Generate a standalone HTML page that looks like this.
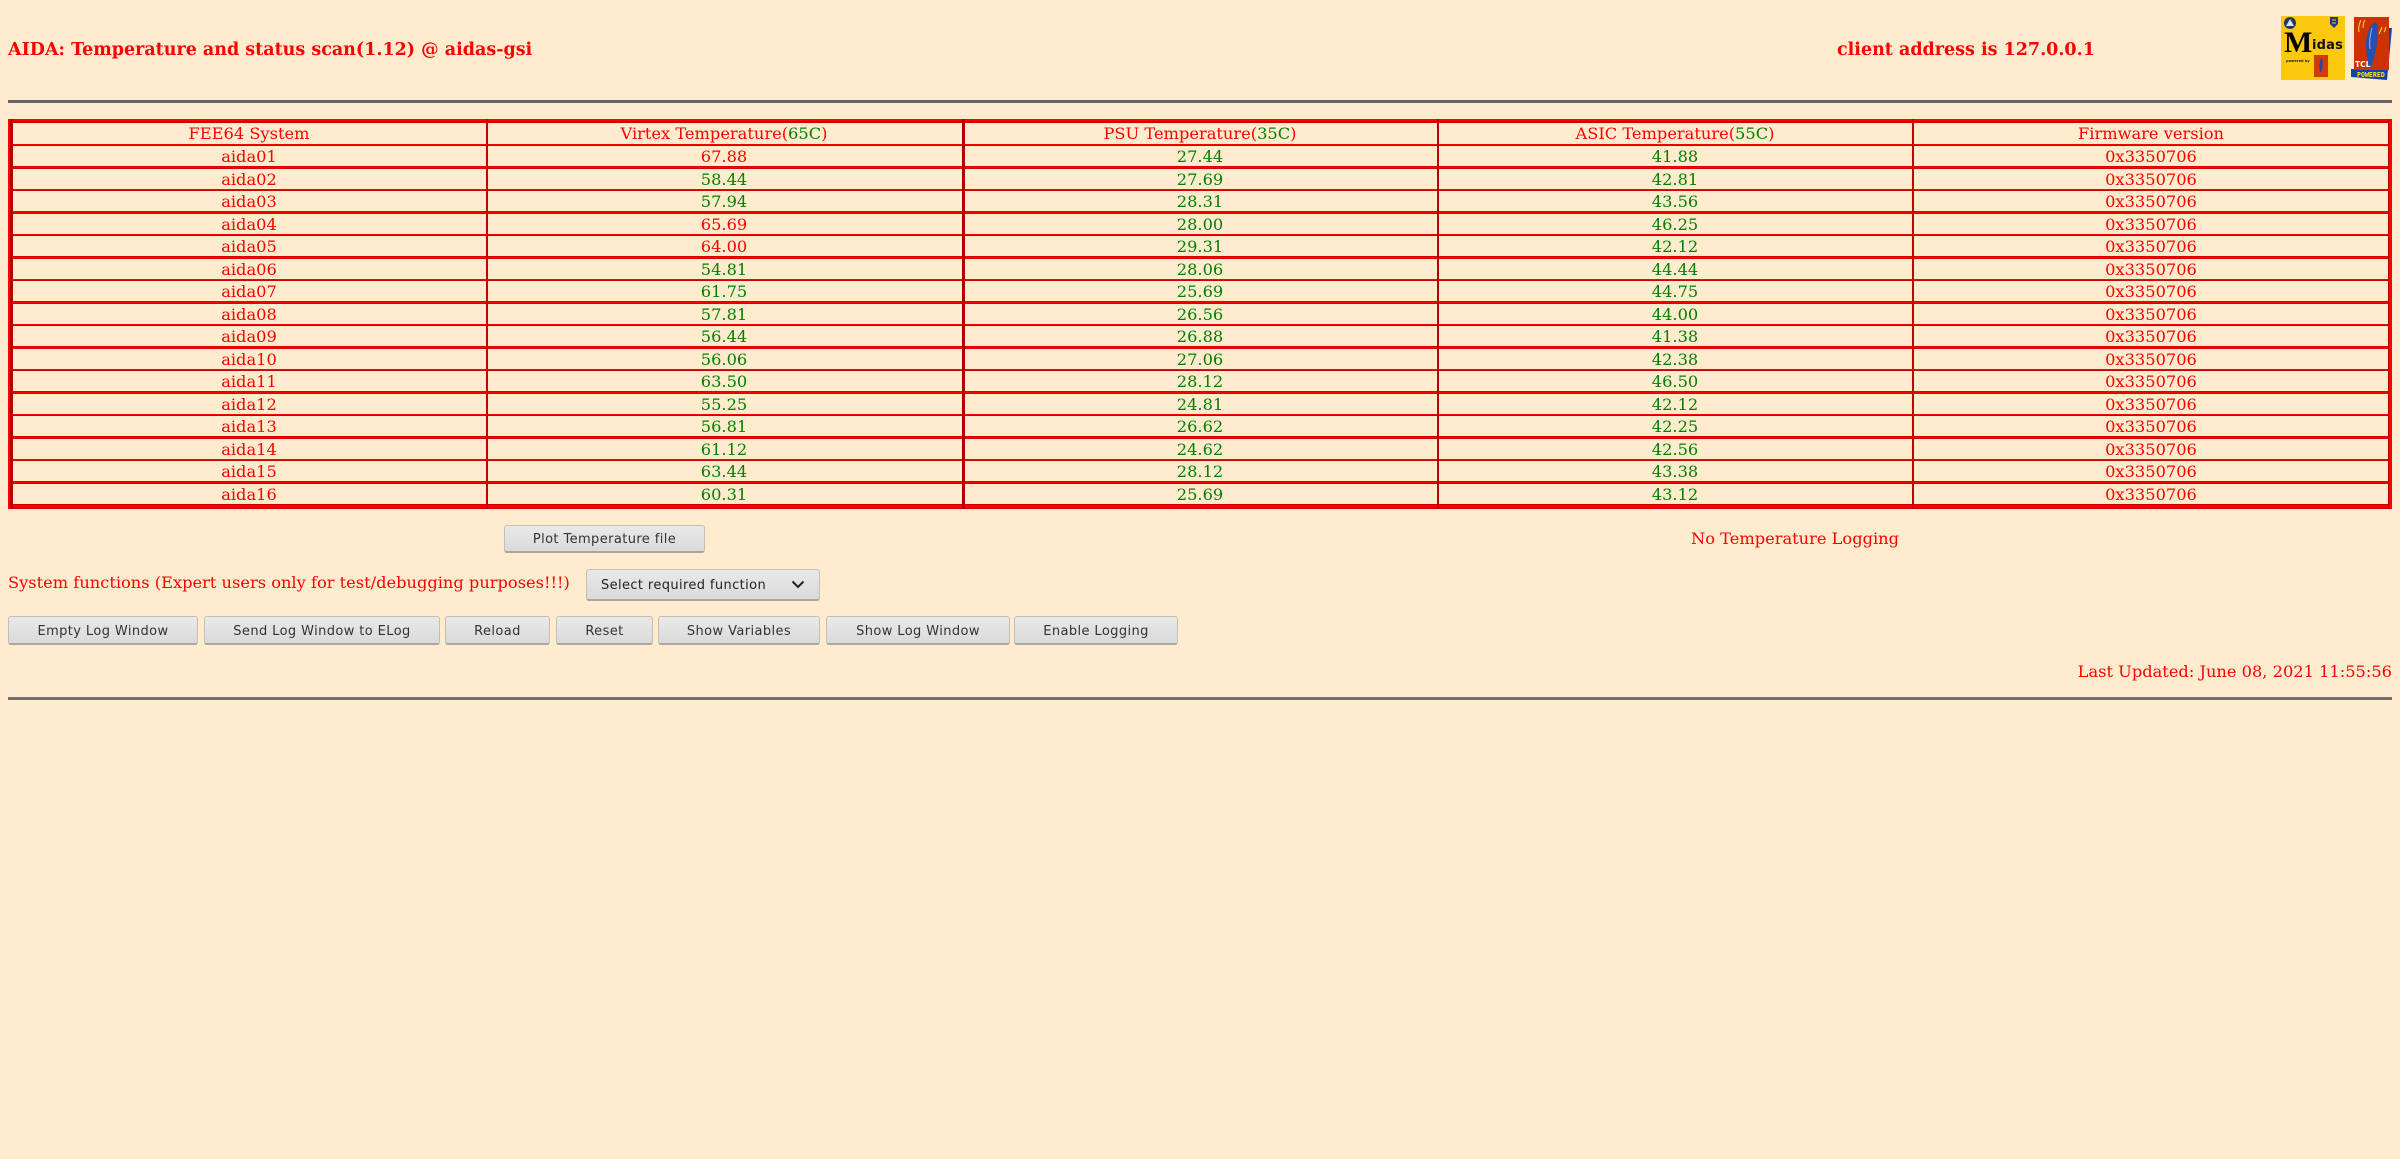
<!DOCTYPE html>
<html><head><meta charset="utf-8"><title>AIDA Temperature</title>
<style>
html,body{margin:0;padding:0;background:#ffebcd;width:2400px;height:1159px;overflow:hidden}
body{position:relative;font-family:"DejaVu Serif",serif;color:#f00;font-size:16.24px}
.a{position:absolute;white-space:nowrap}
.b{font-weight:bold;font-size:17.5px}
table{position:absolute;left:8px;top:123px;width:2386px;border-collapse:collapse;table-layout:fixed;font-size:16.24px}
td{padding:0;text-align:center;line-height:22px;overflow:visible}
tr{height:22px}
tr.t{height:23px}
tr.t td{line-height:23px}
tr.u td{position:relative;top:1px}
.g{color:#008000}
.h{position:absolute;left:8px;width:2384px}
.n{height:2px;background:linear-gradient(#f00 50%,#c00 50%)}
.k{height:3px;background:linear-gradient(#d00 33%,#f00 33%,#f00 67%,#d00 67%)}
.v{position:absolute;top:119px;height:390px}
button{position:absolute;box-sizing:border-box;margin:0;padding:2px 0 0;border:1px solid #c4bfb6;border-bottom:2px solid #aaa69e;border-radius:3px;background:linear-gradient(#e9e9e9,#dadada);color:#333;font-family:"DejaVu Sans",sans-serif;font-size:13px;letter-spacing:.4px;text-align:center}
hr{position:absolute;margin:0;border:0}
</style></head><body>
<div class="a b" style="left:8px;top:38px;line-height:24px">AIDA: Temperature and status scan(1.12) @ aidas-gsi</div>
<div class="a b" style="left:1837px;top:38px;line-height:24px">client address is 127.0.0.1</div>

<svg class="a" style="left:2281px;top:16px" width="64" height="64" viewBox="0 0 64 64">
<rect width="64" height="64" fill="#fcc80e"/>
<circle cx="9" cy="7" r="6" fill="#1d3a63"/><path d="M5 10 L9 3 L13 10Z" fill="#d8e0e8"/>
<path d="M49 1h8v7l-4 4-4-4z" fill="#1d3a8a"/><path d="M51 4h4M51 7h4" stroke="#fcc80e"/>
<text x="3" y="36" font-family="Liberation Serif,serif" font-weight="bold" font-size="30" fill="#000">M</text>
<text x="31" y="33" font-family="DejaVu Sans,sans-serif" font-weight="bold" font-size="13" letter-spacing=".2" fill="#111">idas</text>
<text x="5" y="46" font-family="DejaVu Sans,sans-serif" font-weight="bold" font-size="3.6" fill="#222">powered by</text>
<rect x="33" y="39" width="14" height="22" fill="#d13a10"/><path d="M41 42c-3 3-3 9-2 14l1 0c2-5 2-10 1-14z" fill="#26459c"/>
</svg>
<svg class="a" style="left:2350px;top:15px" width="44" height="66" viewBox="0 0 44 66">
<path d="M1 54 L1 62 L37 65 L38 54Z" fill="#1440b0"/>
<path d="M38 13 L42 13 L38 55 L36 55Z" fill="#1440b0"/>
<rect x="4" y="2" width="35" height="53" fill="#cc3300"/>
<path d="M26 7C20 9 17 18 16 28C16 36 17 44 19 53L21 53C24 44 27 33 27 24C28 17 28 10 26 7Z" fill="#2450b0"/>
<path d="M22 13c-2 7-3 14-2 21" stroke="#9fb0d8" fill="none"/>
<path d="M11 5c-2 4-3 8-2 12M15 5c-2 3-2 6-2 8M32 12c-1 3-2 5-3 7M36 12c-1 2-1 4-2 5" stroke="#f2c14a" stroke-width="1.2" fill="none"/>
<text x="5" y="52" font-family="DejaVu Sans,sans-serif" font-weight="bold" font-size="7.5" fill="#fff">TCL</text>
<text x="7" y="62" font-family="DejaVu Sans Mono,monospace" font-weight="bold" font-size="6.6" fill="#ffee00">POWERED</text>
</svg>

<hr style="left:8px;top:100px;width:2384px;height:3px;background:#666">

<table><colgroup><col style="width:482px"><col style="width:468px"><col style="width:484px"><col style="width:466px"><col style="width:486px"></colgroup>
<tr><td>FEE64 System</td><td>Virtex Temperature(<span class="g">65C</span>)</td><td>PSU Temperature(<span class="g">35C</span>)</td><td>ASIC Temperature(<span class="g">55C</span>)</td><td>Firmware version</td></tr>
<tr class="t"><td>aida01</td><td>67.88</td><td class="g">27.44</td><td class="g">41.88</td><td>0x3350706</td></tr>
<tr class="u"><td>aida02</td><td class="g">58.44</td><td class="g">27.69</td><td class="g">42.81</td><td>0x3350706</td></tr>
<tr class="t"><td>aida03</td><td class="g">57.94</td><td class="g">28.31</td><td class="g">43.56</td><td>0x3350706</td></tr>
<tr class="u"><td>aida04</td><td>65.69</td><td class="g">28.00</td><td class="g">46.25</td><td>0x3350706</td></tr>
<tr class="t"><td>aida05</td><td>64.00</td><td class="g">29.31</td><td class="g">42.12</td><td>0x3350706</td></tr>
<tr class="u"><td>aida06</td><td class="g">54.81</td><td class="g">28.06</td><td class="g">44.44</td><td>0x3350706</td></tr>
<tr class="t"><td>aida07</td><td class="g">61.75</td><td class="g">25.69</td><td class="g">44.75</td><td>0x3350706</td></tr>
<tr class="u"><td>aida08</td><td class="g">57.81</td><td class="g">26.56</td><td class="g">44.00</td><td>0x3350706</td></tr>
<tr class="t"><td>aida09</td><td class="g">56.44</td><td class="g">26.88</td><td class="g">41.38</td><td>0x3350706</td></tr>
<tr class="u"><td>aida10</td><td class="g">56.06</td><td class="g">27.06</td><td class="g">42.38</td><td>0x3350706</td></tr>
<tr class="t"><td>aida11</td><td class="g">63.50</td><td class="g">28.12</td><td class="g">46.50</td><td>0x3350706</td></tr>
<tr class="u"><td>aida12</td><td class="g">55.25</td><td class="g">24.81</td><td class="g">42.12</td><td>0x3350706</td></tr>
<tr class="t"><td>aida13</td><td class="g">56.81</td><td class="g">26.62</td><td class="g">42.25</td><td>0x3350706</td></tr>
<tr class="u"><td>aida14</td><td class="g">61.12</td><td class="g">24.62</td><td class="g">42.56</td><td>0x3350706</td></tr>
<tr class="t"><td>aida15</td><td class="g">63.44</td><td class="g">28.12</td><td class="g">43.38</td><td>0x3350706</td></tr>
<tr class="u"><td>aida16</td><td class="g">60.31</td><td class="g">25.69</td><td class="g">43.12</td><td>0x3350706</td></tr>
</table>

<div class="h" style="top:119px;height:2px;background:#f00"></div>
<div class="h" style="top:121px;height:2px;background:#c00"></div>
<div class="h n" style="top:144px"></div><div class="h k" style="top:166px"></div>
<div class="h n" style="top:189px"></div><div class="h k" style="top:211px"></div>
<div class="h n" style="top:234px"></div><div class="h k" style="top:256px"></div>
<div class="h n" style="top:279px"></div><div class="h k" style="top:301px"></div>
<div class="h n" style="top:324px"></div><div class="h k" style="top:346px"></div>
<div class="h n" style="top:369px"></div><div class="h k" style="top:391px"></div>
<div class="h n" style="top:414px"></div><div class="h k" style="top:436px"></div>
<div class="h n" style="top:459px"></div><div class="h k" style="top:481px"></div>
<div class="h" style="top:504px;height:1px;background:#c00"></div>
<div class="h" style="top:505px;height:3px;background:#f00"></div>
<div class="h" style="top:508px;height:1px;background:#c00"></div>
<div class="v" style="left:8px;width:2px;background:#f00"></div>
<div class="v" style="left:10px;width:3px;background:#b80000"></div>
<div class="v" style="left:486px;width:2px;background:#c80000"></div>
<div class="v" style="left:962px;width:3px;background:#b00000"></div>
<div class="v" style="left:1437px;width:2px;background:#b80000"></div>
<div class="v" style="left:1912px;width:2px;background:#c80000"></div>
<div class="v" style="left:2388px;width:1px;background:#b80000"></div>
<div class="v" style="left:2389px;width:3px;background:#f00"></div>

<button style="left:504px;top:525px;width:201px;height:28px">Plot Temperature file</button>
<div class="a" style="left:1691px;top:528px;line-height:22px">No Temperature Logging</div>
<div class="a" style="left:8px;top:572px;line-height:22px">System functions (Expert users only for test/debugging purposes!!!)</div>
<div class="a" style="left:586px;top:569px;width:234px;height:32px;box-sizing:border-box;border:1px solid #c4bfb6;border-bottom:2px solid #aaa69e;border-radius:3px;background:linear-gradient(#e9e9e9,#dadada);color:#222;font-family:'DejaVu Sans',sans-serif;font-size:13px;letter-spacing:.38px;line-height:31px;padding-left:14px">Select required function
<svg style="position:absolute;left:204px;top:10px" width="14" height="9" viewBox="0 0 14 9"><path d="M1.5 1.5L7 7L12.5 1.5" fill="none" stroke="#222" stroke-width="2"/></svg></div>
<button style="left:8px;top:616px;width:190px;height:29px">Empty Log Window</button>
<button style="left:204px;top:616px;width:236px;height:29px">Send Log Window to ELog</button>
<button style="left:445px;top:616px;width:105px;height:29px">Reload</button>
<button style="left:556px;top:616px;width:97px;height:29px">Reset</button>
<button style="left:658px;top:616px;width:162px;height:29px">Show Variables</button>
<button style="left:826px;top:616px;width:184px;height:29px">Show Log Window</button>
<button style="left:1014px;top:616px;width:164px;height:29px">Enable Logging</button>
<div class="a" style="right:8px;top:661px;line-height:22px">Last Updated: June 08, 2021 11:55:56</div>
<hr style="left:8px;top:697px;width:2384px;height:3px;background:#707070">
</body></html>
